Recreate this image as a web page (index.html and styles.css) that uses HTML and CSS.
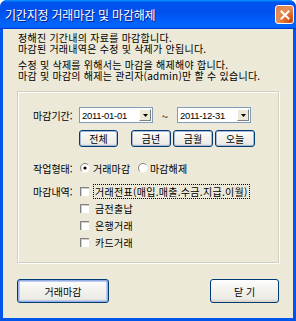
FILE: index.html
```html
<!DOCTYPE html>
<html lang="ko">
<head>
<meta charset="utf-8">
<title>기간지정 거래마감 및 마감해제</title>
<link rel="stylesheet" href="styles.css">
</head>
<body>
<div class="window">
  <div class="titlebar">
    <span class="title">기간지정 거래마감 및 마감해제</span>
    <span class="close">
      <svg width="10" height="10" viewBox="0 0 10 10"><path d="M1.5 1.5 L8.5 8.5 M8.5 1.5 L1.5 8.5" stroke="#fff" stroke-width="2" stroke-linecap="square"/></svg>
    </span>
  </div>
  <div class="client">
    <div class="notes">
      <div class="para">
        <div class="line">정해진 기간내의 자료를 마감합니다.</div>
        <div class="line">마감된 거래내역은 수정 및 삭제가 안됩니다.</div>
      </div>
      <div class="para">
        <div class="line">수정 및 삭제를 위해서는 마감을 해제해야 합니다.</div>
        <div class="line">마감 및 마감의 해제는 관리자(admin)만 할 수 있습니다.</div>
      </div>
    </div>
    <div class="group">
      <div class="row date-row">
        <span class="label">마감기간:</span>
        <div class="combo"><span class="combo-text">2011-01-01</span><span class="combo-btn"><svg width="5" height="3" viewBox="0 0 5 3"><path d="M0 0H5L2.5 3Z" fill="#000"/></svg></span></div>
        <span class="tilde">~</span>
        <div class="combo"><span class="combo-text">2011-12-31</span><span class="combo-btn"><svg width="5" height="3" viewBox="0 0 5 3"><path d="M0 0H5L2.5 3Z" fill="#000"/></svg></span></div>
      </div>
      <div class="row quick-row">
        <button class="btn small first">전체</button>
        <button class="btn small">금년</button>
        <button class="btn small">금월</button>
        <button class="btn small">오늘</button>
      </div>
      <div class="row radio-row">
        <span class="label">작업형태:</span>
        <span class="radio checked"><svg width="10" height="10" viewBox="0 0 10 10"><circle cx="5" cy="5" r="4.5" fill="#fff"/><path d="M1.8 8.2 A4.5 4.5 0 0 1 8.2 1.8" fill="none" stroke="#808080" stroke-width="1"/><circle cx="5" cy="5" r="1.6" fill="#000"/></svg></span>
        <span class="opt">거래마감</span>
        <span class="radio"><svg width="10" height="10" viewBox="0 0 10 10"><circle cx="5" cy="5" r="4.5" fill="#fff"/><path d="M1.8 8.2 A4.5 4.5 0 0 1 8.2 1.8" fill="none" stroke="#808080" stroke-width="1"/></svg></span>
        <span class="opt">마감해제</span>
      </div>
      <div class="row check-row">
        <span class="label">마감내역:</span>
        <div class="checklist">
          <div class="check"><span class="box"></span><span class="opt focus">거래전표(매입.매출.수금.지급.이월)</span></div>
          <div class="check"><span class="box"></span><span class="opt">금전출납</span></div>
          <div class="check"><span class="box"></span><span class="opt">은행거래</span></div>
          <div class="check"><span class="box"></span><span class="opt">카드거래</span></div>
        </div>
      </div>
    </div>
    <div class="actions">
      <button class="btn big default">거래마감</button>
      <button class="btn big close-btn">닫 기</button>
    </div>
  </div>
</div>
</body>
</html>
```

FILE: styles.css
```css
* { box-sizing: border-box; }
html, body { margin: 0; padding: 0; background: #fff; }
body {
  font-family: "Noto Sans CJK KR", "Noto Sans", sans-serif;
  font-size: 10px;
  color: #000;
}
.window {
  width: 296px;
  height: 321px;
  display: flex;
  flex-direction: column;
  background: #0055ea;
  border-radius: 7px 7px 0 0;
  overflow: hidden;
}
.titlebar {
  height: 29px;
  flex: none;
  display: flex;
  align-items: center;
  justify-content: space-between;
  padding: 0 2px 0 5px;
  background: linear-gradient(180deg, #0997ff, #0053ee 8%, #0050ee 40%, #0066ff 88%, #0066ff 93%, #005bff 95%, #003dd7 96%, #003dd7);
}
.title {
  color: #fff;
  font-size: 12px;
  letter-spacing: -0.2px;
  text-shadow: 1px 1px 0 #0a1883;
  line-height: 14px;
  padding-top: 1px;
}
.close {
  width: 19px;
  height: 19px;
  display: flex;
  align-items: center;
  justify-content: center;
  border: 1px solid #fff;
  border-radius: 3px;
  background: radial-gradient(circle at 85% 85%, #cc4600 0%, #dc6527 25%, #e88e55 60%, #e07a48 100%);
}
.client {
  flex: 1;
  margin: 0 3px 3px 3px;
  background: #ece9d8;
  padding: 3px 14px 0 14px;
  display: flex;
  flex-direction: column;
}
.para { margin: 0 0 5px 0; padding-left: 1px; }
.line {
  height: 11px;
  line-height: 11px;
  letter-spacing: 0.25px;
  white-space: nowrap;
}
.group {
  margin-top: 5px;
  height: 172px;
  border: 1px solid #d0d0bf;
  box-shadow: 1px 1px 0 #fff, inset 1px 1px 0 #fff;
  padding: 15px 15px 0 15px;
  display: flex;
  flex-direction: column;
}
.row { display: flex; align-items: center; }
.label { width: 46px; flex: none; }
.date-row { height: 16px; }
.combo {
  width: 74px;
  height: 16px;
  background: #fff;
  border: 1px solid #7f9db9;
  display: flex;
  align-items: center;
  justify-content: space-between;
  padding: 0 1px 0 2px;
}
.combo-text {
  font-family: "Liberation Sans", Arial, sans-serif;
  font-size: 9.5px;
  letter-spacing: -0.3px;
}
.combo-btn {
  width: 12px;
  height: 12px;
  display: flex;
  align-items: center;
  justify-content: center;
  background: #ece9d8;
  border: 1px solid;
  border-color: #fff #808080 #808080 #fff;
}
.tilde {
  width: 24px;
  text-align: center;
  font-size: 11px;
  padding-top: 2px;
}
.btn {
  font-family: inherit;
  font-size: 10px;
  color: #000;
  padding: 0;
  border: 1px solid #003c74;
  border-radius: 3px;
  background: linear-gradient(180deg, #fff 0%, #f4f3ee 40%, #ecebe6 85%, #d6d0c5 100%);
}
.quick-row { margin-top: 7px; padding-left: 46px; gap: 2px; }
.btn.small {
  height: 17px;
  width: 40px;
  box-shadow: inset 0 0 0 1px #a8b8d8;
}
.btn.small.first { width: 39px; margin-right: 11px; }
.radio-row { margin-top: 14px; height: 14px; }
.radio { width: 10px; height: 10px; display: flex; margin-left: 1px; }
.opt { padding-left: 3px; letter-spacing: 0.1px; }
.radio-row .opt { width: 47px; }
.radio-row .opt:last-child { width: auto; padding-left: 2px; }
.check-row { margin-top: 8px; align-items: flex-start; }
.check-row .label { height: 17px; display: flex; align-items: center; }
.check { height: 17px; display: flex; align-items: center; }
.box {
  width: 9px;
  height: 9px;
  margin-left: 1px;
  background: #fff;
  border-top: 1px solid #808080;
  border-left: 1px solid #808080;
  box-shadow: inset 1px 1px 0 #d4d0c8;
}
.check .opt { padding: 0 1px; margin-left: 4px; line-height: 13px; letter-spacing: 0.3px; border: 1px dotted transparent; }
.check .opt.focus { border-color: #000; }
.actions {
  margin-top: 16px;
  display: flex;
  justify-content: space-between;
}
.btn.big { height: 24px; }
.btn.default {
  width: 92px;
  box-shadow: inset 0 0 0 1px #97aee2, inset 0 0 0 2px #bccbf0;
}
.close-btn { width: 69px; }
```
